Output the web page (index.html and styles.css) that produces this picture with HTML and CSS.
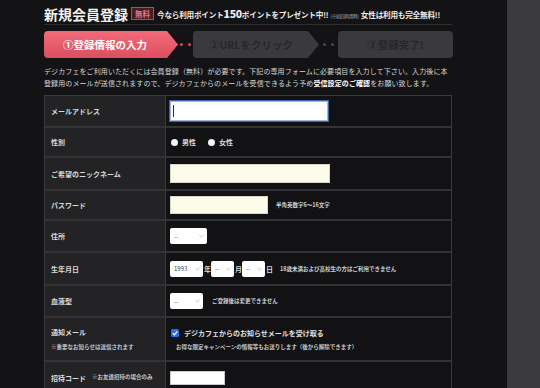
FILE: index.html
```html
<!DOCTYPE html>
<html lang="ja">
<head>
<meta charset="utf-8">
<link rel="stylesheet" href="styles.css">
</head>
<body>
<div class="page">
  <div class="main">
    <div class="head">
      <h1 class="title">新規会員登録</h1>
      <span class="badge">無料</span>
      <span class="promo">今なら利用ポイント<b class="num">150</b>ポイントをプレゼント中!!<small class="note">(※初回利用時)</small>女性は利用も完全無料!!</span>
    </div>

    <div class="steps">
      <div class="step step-on">①登録情報の入力</div>
      <div class="dots dots-on"><i></i><i></i></div>
      <div class="step step-off">②URLをクリック</div>
      <div class="dots dots-wide"><i></i><i></i></div>
      <div class="step step-end">③登録完了!</div>
    </div>

    <p class="desc">デジカフェをご利用いただくには会員登録（無料）が必要です。下記の専用フォームに必要項目を入力して下さい。入力後に本<br>登録用のメールが送信されますので、デジカフェからのメールを受信できるよう予め<b>受信設定のご確認</b>をお願い致します。</p>

    <div class="form">
      <div class="row h30">
        <div class="lab">メールアドレス</div>
        <div class="fld"><span class="input input-mail"><i class="caret"></i></span></div>
      </div>
      <div class="row h30">
        <div class="lab">性別</div>
        <div class="fld">
          <span class="radio"></span><span class="opt">男性</span>
          <span class="radio"></span><span class="opt">女性</span>
        </div>
      </div>
      <div class="row h33">
        <div class="lab">ご希望のニックネーム</div>
        <div class="fld"><span class="input input-nick"></span></div>
      </div>
      <div class="row h30">
        <div class="lab">パスワード</div>
        <div class="fld"><span class="input input-pass"></span><span class="hint hint-pass">半角英数字6～16文字</span></div>
      </div>
      <div class="row h32">
        <div class="lab">住所</div>
        <div class="fld"><span class="sel sel-addr">--<svg class="chev" viewBox="0 0 6 4"><polyline points="0.5,0.8 3,3.2 5.5,0.8"/></svg></span></div>
      </div>
      <div class="row h33">
        <div class="lab">生年月日</div>
        <div class="fld">
          <span class="sel sel-year">1993<svg class="chev" viewBox="0 0 6 4"><polyline points="0.5,0.8 3,3.2 5.5,0.8"/></svg></span><span class="unit">年</span>
          <span class="sel sel-md">--<svg class="chev" viewBox="0 0 6 4"><polyline points="0.5,0.8 3,3.2 5.5,0.8"/></svg></span><span class="unit">月</span>
          <span class="sel sel-md">--<svg class="chev" viewBox="0 0 6 4"><polyline points="0.5,0.8 3,3.2 5.5,0.8"/></svg></span><span class="unit">日</span>
          <span class="hint hint-age">18歳未満および高校生の方はご利用できません</span>
        </div>
      </div>
      <div class="row h32">
        <div class="lab">血液型</div>
        <div class="fld"><span class="sel sel-year">--<svg class="chev" viewBox="0 0 6 4"><polyline points="0.5,0.8 3,3.2 5.5,0.8"/></svg></span><span class="hint hint-blood">ご登録後は変更できません</span></div>
      </div>
      <div class="row h44">
        <div class="lab lab-stack"><span>通知メール</span><span class="sub">※重要なお知らせは送信されます</span></div>
        <div class="fld fld-stack">
          <span class="chk-line"><svg class="chk" viewBox="0 0 8 8"><rect x="0" y="0" width="8" height="8" rx="1.5"/><polyline points="1.8,4.2 3.4,5.8 6.3,2.3"/></svg>デジカフェからのお知らせメールを受け取る</span>
          <span class="sub sub-chk">お得な限定キャンペーンの情報等もお送りします（後から解除できます）</span>
        </div>
      </div>
      <div class="row h-last">
        <div class="lab">招待コード<span class="sub sub-inv">※お友達招待の場合のみ</span></div>
        <div class="fld"><span class="input input-inv"></span></div>
      </div>
    </div>
  </div>
  <div class="side"></div>
</div>
</body>
</html>
```

FILE: styles.css
```css
* { box-sizing: border-box; }
html, body { margin: 0; padding: 0; }
body {
  background: #131315;
  font-family: "Noto Sans CJK JP", "Noto Sans", sans-serif;
  color: #dcdcdc;
  width: 540px;
  height: 388px;
  overflow: hidden;
}
.page { display: flex; height: 388px; }
.main { width: 507px; padding-left: 44px; }
.side { flex: 1; background: #3b3b3d; }

.head {
  width: 408px;
  height: 25px;
  display: flex;
  align-items: center;
  padding-top: 3px;
  border-bottom: 1px solid #2e2e31;
  white-space: nowrap;
}
.title {
  flex: none;
  margin: 0;
  font-size: 14px;
  line-height: 1;
  font-weight: 700;
  color: #f2f2f2;
}
.badge {
  flex: none;
  margin-left: 3px;
  font-size: 7.5px;
  line-height: 1;
  font-weight: 700;
  color: #e07a84;
  background: #4a1c22;
  border: 1px solid #c8424f;
  padding: 1.5px 3px;
}
.promo {
  flex: none;
  margin-left: 3px;
  font-size: 7.6px;
  font-weight: 700;
  color: #ececec;
  letter-spacing: -0.2px;
}
.num { font-size: 10.5px; letter-spacing: -0.3px; }
.note { font-size: 4.5px; font-weight: 400; color: #bbb; margin: 0 2px; }

.steps {
  margin-top: 6px;
  height: 27px;
  display: flex;
  width: 409px;
}
.step {
  display: flex;
  align-items: center;
  justify-content: center;
  font-size: 10.5px;
  font-weight: 700;
  height: 27px;
}
.step-on {
  width: 134px;
  padding-right: 12px;
  color: #fff;
  background: linear-gradient(#f26b79, #db4f60);
  border-radius: 4px 0 0 4px;
  clip-path: polygon(0 0, calc(100% - 11px) 0, 100% 50%, calc(100% - 11px) 100%, 0 100%);
}
.step-off {
  width: 126px;
  padding-right: 10px;
  color: #262628;
  background: #3a3a3c;
  border-radius: 4px 0 0 4px;
  clip-path: polygon(0 0, calc(100% - 11px) 0, 100% 50%, calc(100% - 11px) 100%, 0 100%);
}
.step-end {
  width: 115px;
  color: #262628;
  background: #3a3a3c;
  border-radius: 4px;
}
.dots {
  width: 15px;
  display: flex;
  align-items: center;
  justify-content: center;
  gap: 5px;
}
.dots-wide { width: 19px; }
.dots i {
  width: 3px;
  height: 3px;
  border-radius: 50%;
  background: #4a4a4c;
}
.dots-on i { background: #e0485a; }

.desc {
  margin: 7px 0 0;
  font-size: 7px;
  line-height: 12px;
  color: #d6d6d6;
  white-space: nowrap;
  letter-spacing: 0.1px;
}
.desc b { color: #fff; font-weight: 700; }

.form {
  margin-top: 6px;
  width: 408px;
  border: 1px solid #3a3a3c;
  border-bottom: none;
}
.row {
  display: flex;
  border-top: 2px solid #333336;
}
.row:first-child { border-top: none; }
.h30 { height: 30px; }
.h32 { height: 32px; }
.h33 { height: 33px; }
.h44 { height: 44px; }
.h-last { height: 40px; }
.lab {
  width: 121px;
  flex: none;
  background: #232325;
  border-right: 1px solid #3a3a3c;
  padding-left: 6px;
  display: flex;
  align-items: center;
  font-size: 7px;
  font-weight: 700;
  color: #dadada;
}
.h-last .lab { align-items: flex-start; padding-top: 11px; }
.h-last .fld { align-items: flex-start; padding-top: 9px; }
.lab-stack { flex-direction: column; align-items: flex-start; justify-content: center; gap: 6px; }
.sub { font-size: 5.5px; font-weight: 700; color: #c8c8c8; }
.sub-inv { margin-left: 6px; }
.fld {
  flex: 1;
  display: flex;
  align-items: center;
  padding-left: 4px;
  background: #121214;
}
.fld-stack { flex-direction: column; align-items: flex-start; justify-content: center; gap: 5px; }

.input { display: block; background: #fff; border: 1px solid #c9c9c9; }
.input-mail {
  width: 158px;
  height: 20px;
  border: 1px solid #9fb6de;
  box-shadow: 0 0 0 1px #3f64a6;
  position: relative;
}
.caret {
  position: absolute;
  left: 2px;
  top: 3px;
  width: 1px;
  height: 12px;
  background: #333;
}
.input-nick { width: 160px; height: 19px; background: #fdfbe9; border-color: #d8d6c4; }
.input-pass { width: 98px; height: 18px; background: #fdfbe9; border-color: #d8d6c4; }
.input-inv { width: 55px; height: 14px; }

.radio {
  width: 7px;
  height: 7px;
  border-radius: 50%;
  background: #f4f4f4;
  margin-left: 1px;
}
.opt { font-size: 7px; font-weight: 700; color: #d8d8d8; margin: 0 11px 0 4px; }

.hint { font-size: 5.5px; font-weight: 700; color: #d0d0d0; white-space: nowrap; }
.hint-pass { margin-left: 8px; }
.hint-age { margin-left: 7px; }
.hint-blood { margin-left: 9px; }

.sel {
  height: 16px;
  background: #fff;
  border-radius: 2px;
  display: flex;
  align-items: center;
  justify-content: space-between;
  padding: 0 3px 0 4px;
  font-size: 6px;
  color: #444;
}
.sel-addr { width: 37px; }
.sel-year { width: 33px; }
.sel-md { width: 23px; }
.chev { width: 5px; height: 4px; fill: none; stroke: #aaa; stroke-width: 0.9; }
.unit { font-size: 7px; font-weight: 700; color: #d8d8d8; margin-left: 1px; width: 7px; }

.chk-line { display: flex; align-items: center; font-size: 7px; font-weight: 700; color: #e0e0e0; margin-left: 1px; }
.chk { width: 8px; height: 8px; margin-right: 5px; }
.chk rect { fill: #2d6fe0; }
.chk polyline { fill: none; stroke: #fff; stroke-width: 1.2; }
.sub-chk { margin-left: 6px; }
```
